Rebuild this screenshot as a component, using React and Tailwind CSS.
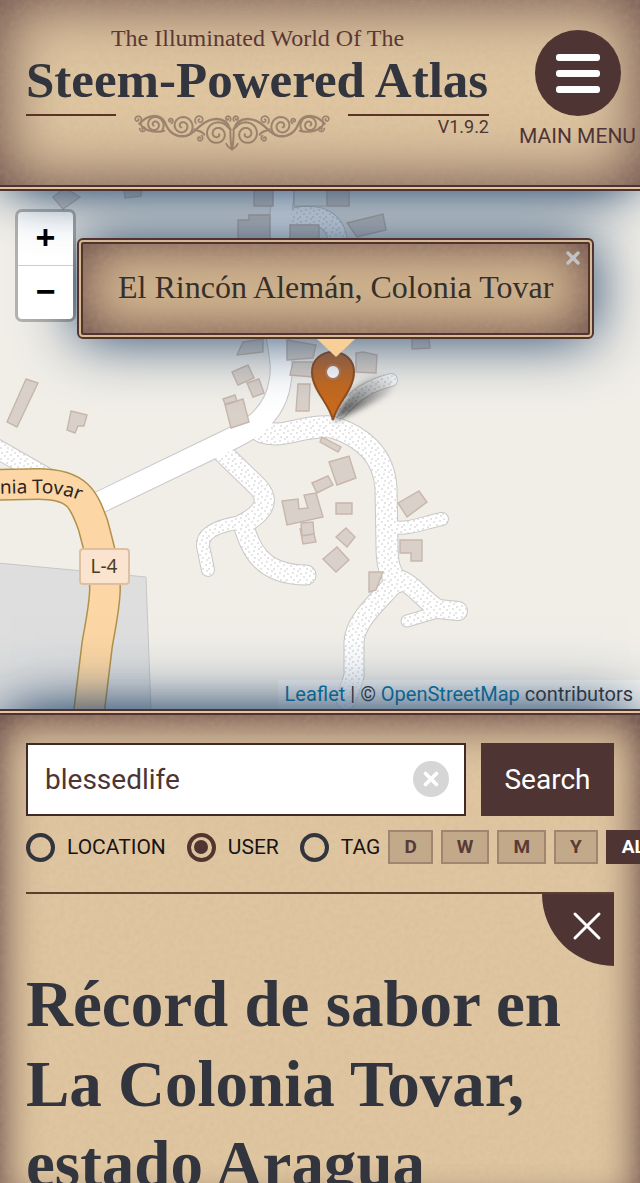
import React, { useState } from 'react';
import { X } from 'lucide-react';

const periods = ['D', 'W', 'M', 'Y', 'ALL'];

const searchTypes = [
  { value: 'location', label: 'LOCATION' },
  { value: 'user', label: 'USER' },
  { value: 'tag', label: 'TAG' },
];

const buildings = [
  '322,437 341,447 338,452 320,442',
  '329,462 349,456 356,478 337,485',
  '312,483 328,476 333,485 317,493',
  '282,501 298,499 299,509 308,508 304,495 316,493 323,517 287,525',
  '301,523 313,522 314,534 302,536',
  '300,528 302,536 314,534 316,542 303,544',
  '336,503 352,503 352,514 336,514',
  '346,528 355,537 347,547 336,537',
  '337,547 349,560 336,572 323,559',
  '369,572 383,572 376,590 369,592',
  '398,503 419,491 427,502 407,517',
  '400,540 422,540 422,561 411,561 411,553 400,553',
  '232,372 248,365 254,378 238,385',
  '247,383 259,379 264,393 253,397',
  '225,405 243,399 249,422 231,428',
  '223,399 235,395 237,401 225,404',
  '298,384 310,384 309,411 296,411',
  '356,353 363,352 377,355 376,373 356,372',
  '293,362 313,362 313,377 290,375',
  '287,340 316,345 313,358 287,360',
  '243,342 263,339 263,352 237,355',
  '26,379 38,383 17,427 7,422',
  '71,411 87,415 84,426 78,426 75,433 67,430',
  '53,197 65,188 80,197 63,209',
  '124,188 142,188 141,196 125,198',
  '254,188 273,188 273,206 254,206',
  '327,188 349,188 349,206 327,206',
  '249,215 270,215 270,240 238,240 238,220 249,220',
  '347,223 383,214 386,230 357,237',
  '290,225 319,225 319,240 290,240',
  '412,339 429,339 430,348 412,349',
];

// unpaved roads, with their widths
const tracks = [
  { d: 'M262 432 C285 439 300 425 332 427 C362 436 384 455 386 488 L387 545 C387 566 390 572 397 582', w: 21 },
  { d: 'M397 580 C378 602 355 620 354 642 L354 676 L346 700', w: 19 },
  { d: 'M398 579 C412 582 425 602 438 609 L458 611', w: 18 },
  { d: 'M407 621 L434 613', w: 11 },
  { d: 'M392 527 C410 530 425 522 442 519', w: 12 },
  { d: 'M222 452 L258 487 C270 500 265 512 243 524', w: 19 },
  { d: 'M242 522 C215 526 202 534 203 546 L208 570', w: 12 },
  { d: 'M243 524 C250 545 258 575 306 575', w: 19 },
  { d: 'M340 412 C355 395 370 385 391 380', w: 12 },
  { d: 'M-8 446 L48 478', w: 18 },
  { d: 'M296 217 C322 212 338 222 338 246', w: 18 },
];

const mainRoad = 'M284 185 C276 250 275 310 277 335 C280 355 283 368 280 382 C276 410 256 427 235 437 L92 506';
const highway = 'M-8 485 L38 484 C78 484 84 500 93 525 C99 548 105 568 105 590 C104 612 99 632 97 646 L88 720';

function spiral(cx, cy, radius, start, turns, dir) {
  const points = [];
  const steps = 48;
  for (let i = 0; i <= steps; i++) {
    const t = i / steps;
    const r = radius * (1 - t * 0.85);
    const a = start + dir * t * turns * Math.PI * 2;
    points.push(`${(cx + r * Math.cos(a)).toFixed(1)} ${(cy + r * Math.sin(a)).toFixed(1)}`);
  }
  return 'M' + points.join(' L');
}

function Parchment() {
  return (
    <svg className="pointer-events-none absolute inset-0 -z-10 h-full w-full opacity-20" aria-hidden="true">
      <filter id="grain">
        <feTurbulence type="fractalNoise" baseFrequency="0.2" numOctaves="3" />
        <feColorMatrix values="0 0 0 0 0.55  0 0 0 0 0.4  0 0 0 0 0.25  1.6 0 0 0 -0.55" />
      </filter>
      <rect width="100%" height="100%" filter="url(#grain)" />
    </svg>
  );
}

function OrnamentHalf() {
  return (
    <g>
      <path d={spiral(291, 98, 38, -0.5, 1.9, -1)} strokeWidth="6" />
      <path d={spiral(186, 74, 33, 0.9, 1.8, -1)} strokeWidth="6" />
      <path d={spiral(103, 70, 28, 0.6, 1.7, -1)} strokeWidth="6" />
      <path d={spiral(238, 56, 15, 2.4, 1.3, 1)} strokeWidth="5" />
      <path d={spiral(52, 54, 13, 1.2, 1.3, -1)} strokeWidth="5" />
      <path d={spiral(68, 82, 10, 3.2, 1.2, -1)} strokeWidth="5" />
      <path d={spiral(238, 111, 10, -1, 1.2, 1)} strokeWidth="5" />
      <path d={spiral(150, 58, 9, 1.2, 1.2, -1)} strokeWidth="5" />
      <path d={spiral(322, 52, 10, 0.8, 1.2, -1)} strokeWidth="5" />
      <path d="M58 68 C78 40 118 34 134 64 C146 96 168 108 196 104 C226 98 238 60 278 54 C304 50 322 62 330 84" strokeWidth="7" />
      <path d="M60 66 C66 84 98 98 132 88 M222 84 C232 92 244 86 252 100 M330 84 C330 110 330 124 335 144 M318 128 C322 138 328 140 335 144" strokeWidth="6" />
    </g>
  );
}

function Ornament() {
  return (
    <svg viewBox="36 38 598 114" className="h-[38px] w-[200px] shrink-0 opacity-80" fill="none" stroke="#8d7462" strokeLinecap="round" aria-hidden="true">
      <OrnamentHalf />
      <g transform="translate(670 0) scale(-1 1)">
        <OrnamentHalf />
      </g>
    </svg>
  );
}

function Header() {
  return (
    <header className="relative isolate z-10 flex items-start justify-between gap-4 border-b-[6px] border-double border-[#4e3332] bg-[#dfc6a1] pt-6 pr-1 pb-[33px] pl-[26px] shadow-[inset_0_0_65px_#5e4040,0_0_50px_-10px_#24466b,0_0_60px_-10px_#24466b]">
      <Parchment />
      <div className="max-w-[463px] flex-1 font-['Liberation_Serif',serif]">
        <p className="text-center text-[24px] leading-[28px] text-[#5a3835]">The Illuminated World Of The</p>
        <h1 className="text-[51px] leading-[56px] font-bold whitespace-nowrap text-[#32353d]">Steem-Powered Atlas</h1>
        <div className="mt-[6px] flex items-start gap-4">
          <div className="w-[90px] border-t-2 border-[#5a3326]" />
          <Ornament />
          <div className="flex-1 border-t-2 border-[#5a3326] text-right font-[Roboto,sans-serif] text-[18px] leading-[22px] text-[#4e3534]">
            V1.9.2
          </div>
        </div>
      </div>
      <button type="button" className="mt-[6px] flex flex-col items-center gap-2 text-[21px] leading-[24px] whitespace-nowrap text-[#4e3534]">
        <span className="flex size-[86px] flex-col items-center justify-center gap-[9px] rounded-full bg-[#4e3534]">
          <span className="h-[7px] w-[44px] rounded-[3px] bg-white" />
          <span className="h-[7px] w-[44px] rounded-[3px] bg-white" />
          <span className="h-[7px] w-[44px] rounded-[3px] bg-white" />
        </span>
        MAIN MENU
      </button>
    </header>
  );
}

function MapTiles() {
  return (
    <svg viewBox="0 191 640 518" preserveAspectRatio="xMidYMid slice" className="absolute inset-0 h-full w-full" aria-hidden="true">
      <defs>
        <pattern id="gravel" width="13" height="11" patternUnits="userSpaceOnUse">
          <rect width="13" height="11" fill="#fff" />
          <g fill="#b9b9b9">
            <circle cx="2" cy="2" r="0.7" />
            <circle cx="7" cy="1" r="0.7" />
            <circle cx="11" cy="4" r="0.7" />
            <circle cx="5" cy="5" r="0.7" />
            <circle cx="1" cy="8" r="0.7" />
            <circle cx="8" cy="8" r="0.7" />
            <circle cx="12" cy="10" r="0.7" />
          </g>
        </pattern>
        <linearGradient id="pin" x1="0" y1="0" x2="0" y2="1">
          <stop offset="0" stopColor="#b2693a" />
          <stop offset="0.5" stopColor="#c4691f" />
          <stop offset="1" stopColor="#cb6a1c" />
        </linearGradient>
        <linearGradient id="pinShadow" x1="0" y1="1" x2="1" y2="0">
          <stop offset="0" stopColor="#000" stopOpacity="0.8" />
          <stop offset="1" stopColor="#000" stopOpacity="0" />
        </linearGradient>
        <filter id="soft" x="-30%" y="-30%" width="160%" height="160%">
          <feGaussianBlur stdDeviation="3" />
        </filter>
        <path id="highwayName" d="M-8 494 L40 493 C64 494 74 496 98 510" />
      </defs>
      <path d="M-2 563 L146 577 L151 712 L-2 712 Z" fill="#dedede" stroke="#c6c6c6" />
      <g fill="none" strokeLinecap="round" strokeLinejoin="round">
        {tracks.map((t) => (
          <path key={t.d} d={t.d} stroke="#c8c8c8" strokeWidth={t.w + 2} />
        ))}
        <path d={mainRoad} stroke="#c8c8cb" strokeWidth="23" />
        {tracks.map((t) => (
          <path key={t.d} d={t.d} stroke="url(#gravel)" strokeWidth={t.w} />
        ))}
        <path d={mainRoad} stroke="#fff" strokeWidth="21" />
        <path d={highway} stroke="#b1924a" strokeWidth="32" />
        <path d={highway} stroke="#fcd6a4" strokeWidth="29" />
      </g>
      <path d="M294 190 V206 H326" fill="none" stroke="#c4bcb8" />
      <g fill="#d9d0c9" stroke="#c7b6ac" strokeWidth="1.4">
        {buildings.map((points) => (
          <polygon key={points} points={points} />
        ))}
      </g>
      <text fontFamily="Noto Sans, sans-serif" fontSize="19" fill="#2a251f" stroke="#fcd6a4" strokeWidth="3" paintOrder="stroke">
        <textPath href="#highwayName" startOffset="8">nia Tovar</textPath>
      </text>
      <rect x="80" y="549" width="49" height="35" rx="3" fill="#fae4d0" stroke="#dfbf9f" strokeWidth="2" />
      <text x="104" y="573" textAnchor="middle" fontFamily="Noto Sans, sans-serif" fontSize="19" fill="#4a3c24">L-4</text>
      <path d="M333 421 C340 408 348 388 372 378 C394 372 404 382 384 396 C366 406 350 414 333 421 Z" fill="url(#pinShadow)" filter="url(#soft)" />
      <path d="M333 420 C329 403 312 390 312 372 C312 360 321 352 333 352 C345 352 354 360 354 372 C354 390 337 403 333 420 Z" fill="url(#pin)" stroke="#8f4f22" strokeWidth="2" />
      <circle cx="333" cy="372" r="7" fill="#fff" stroke="#b87b55" strokeWidth="2" />
    </svg>
  );
}

function MapView() {
  const [popupOpen, setPopupOpen] = useState(true);

  return (
    <main className="relative h-[518px] shrink-0 overflow-hidden bg-[#f1eee8]">
      <MapTiles />

      {/* Popup */}
      {popupOpen && (
        <div className="absolute top-[47px] left-[77px] flex flex-col items-center">
          <div className="relative isolate rounded-[6px] border-[6px] border-double border-[#54342f] bg-[#d7bb94] px-[35px] pt-[25px] pb-[28px] shadow-[inset_0_0_55px_#5e4040,0_0_60px_#1f4166]">
            <Parchment />
            <p className="font-['Liberation_Serif',serif] text-[32px] leading-[36px] whitespace-nowrap text-[#36302a]">
              El Rincón Alemán, Colonia Tovar
            </p>
            <button type="button" aria-label="Close popup" className="absolute top-[4px] right-[5px] text-[#c3c3c3]" onClick={() => setPopupOpen(false)}>
              <X size={20} strokeWidth={4} />
            </button>
          </div>
          <svg viewBox="0 0 38 18" className="relative h-[18px] w-[38px]" aria-hidden="true">
            <path d="M0 0 H38 L19 18 Z" fill="#f8cf97" />
          </svg>
        </div>
      )}

      {/* Zoom control */}
      <div className="absolute top-[18px] left-[15px] flex w-[61px] flex-col rounded-[7px] border-[3px] border-black/25 bg-white bg-clip-padding font-['Liberation_Mono',monospace] text-[34px] leading-[56px] font-bold text-black">
        <button type="button" aria-label="Zoom in" className="h-[54px] border-b border-[#ccc]">+</button>
        <button type="button" aria-label="Zoom out" className="h-[53px]">−</button>
      </div>

      <div className="absolute right-0 bottom-0 bg-white/50 px-[7px] text-[20px] leading-[29px] whitespace-nowrap text-[#333]">
        <a href="#leaflet" className="text-[#0078a8]">Leaflet</a> | ©{' '}
        <a href="#osm" className="text-[#0078a8]">OpenStreetMap</a> contributors
      </div>
    </main>
  );
}

function SearchPanel() {
  const [query, setQuery] = useState('blessedlife');
  const [type, setType] = useState('user');
  const [period, setPeriod] = useState('ALL');

  return (
    <section className="relative isolate z-10 flex-1 overflow-hidden border-t-[6px] border-double border-[#4e3332] bg-[#dfc6a1] px-[26px] pt-7 shadow-[inset_0_36px_50px_-30px_#5e4040,inset_30px_0_40px_-30px_#5e4040,inset_-30px_0_40px_-30px_#5e4040,0_0_50px_-10px_#24466b,0_0_70px_-10px_#24466b]">
      <Parchment />
      <form onSubmit={(e) => e.preventDefault()}>
        <div className="flex gap-[15px]">
          <div className="relative min-w-0 flex-1">
            <input
              type="text"
              aria-label="Search"
              value={query}
              onChange={(e) => setQuery(e.target.value)}
              className="h-[73px] w-full border-2 border-[#3f2a29] bg-white pr-[60px] pl-[17px] text-[28px] text-[#4e3534] outline-none"
            />
            <button
              type="button"
              aria-label="Clear"
              onClick={() => setQuery('')}
              className="absolute top-[18px] right-[17px] flex size-[36px] items-center justify-center rounded-full bg-[#d6d6d6] text-white"
            >
              <X size={22} strokeWidth={4} />
            </button>
          </div>
          <button type="submit" className="h-[73px] w-[133px] bg-[#4e3534] text-[28px] text-white">Search</button>
        </div>

        <div className="mt-[14px] flex h-[34px] items-center whitespace-nowrap">
          {searchTypes.map((t) => (
            <label key={t.value} className="mr-[21px] flex shrink-0 items-center gap-3 text-[21px] leading-[24px] text-[#191313] last-of-type:mr-2">
              <input
                type="radio"
                name="type"
                value={t.value}
                checked={type === t.value}
                onChange={() => setType(t.value)}
                className="grid size-[29px] appearance-none place-content-center rounded-full border-4 border-[#32353d] before:size-[14px] before:rounded-full before:content-[''] checked:border-[#54342f] checked:before:bg-[#4e3534]"
              />
              {t.label}
            </label>
          ))}
          <div className="flex shrink-0 gap-2">
            {periods.map((p) => (
              <button
                key={p}
                type="button"
                aria-pressed={period === p}
                onClick={() => setPeriod(p)}
                className="h-[34px] border-2 border-[#a08670] bg-[#c2a98a] px-[14px] text-[19px] leading-[30px] font-bold text-[#5a3b37] aria-pressed:border-[#4e3534] aria-pressed:bg-[#4e3534] aria-pressed:text-white"
              >
                {p}
              </button>
            ))}
          </div>
        </div>
      </form>

      <article className="relative mt-7 border-t-2 border-[#5a3f2c] pt-[70px]">
        <button type="button" aria-label="Close article" className="absolute top-0 right-0 flex size-[72px] items-start justify-end rounded-bl-[72px] bg-[#4e3534] pt-2 pr-[3px] text-white">
          <X size={48} strokeWidth={3} absoluteStrokeWidth />
        </button>
        <h2 className="font-['Liberation_Serif',serif] text-[65px] leading-[80px] font-bold text-[#32353d]">
          Récord de sabor en La Colonia Tovar, estado Aragua
        </h2>
      </article>
    </section>
  );
}

export default function App() {
  return (
    <div className="flex h-screen flex-col overflow-hidden font-[Roboto,sans-serif]">
      <Header />
      <MapView />
      <SearchPanel />
    </div>
  );
}
